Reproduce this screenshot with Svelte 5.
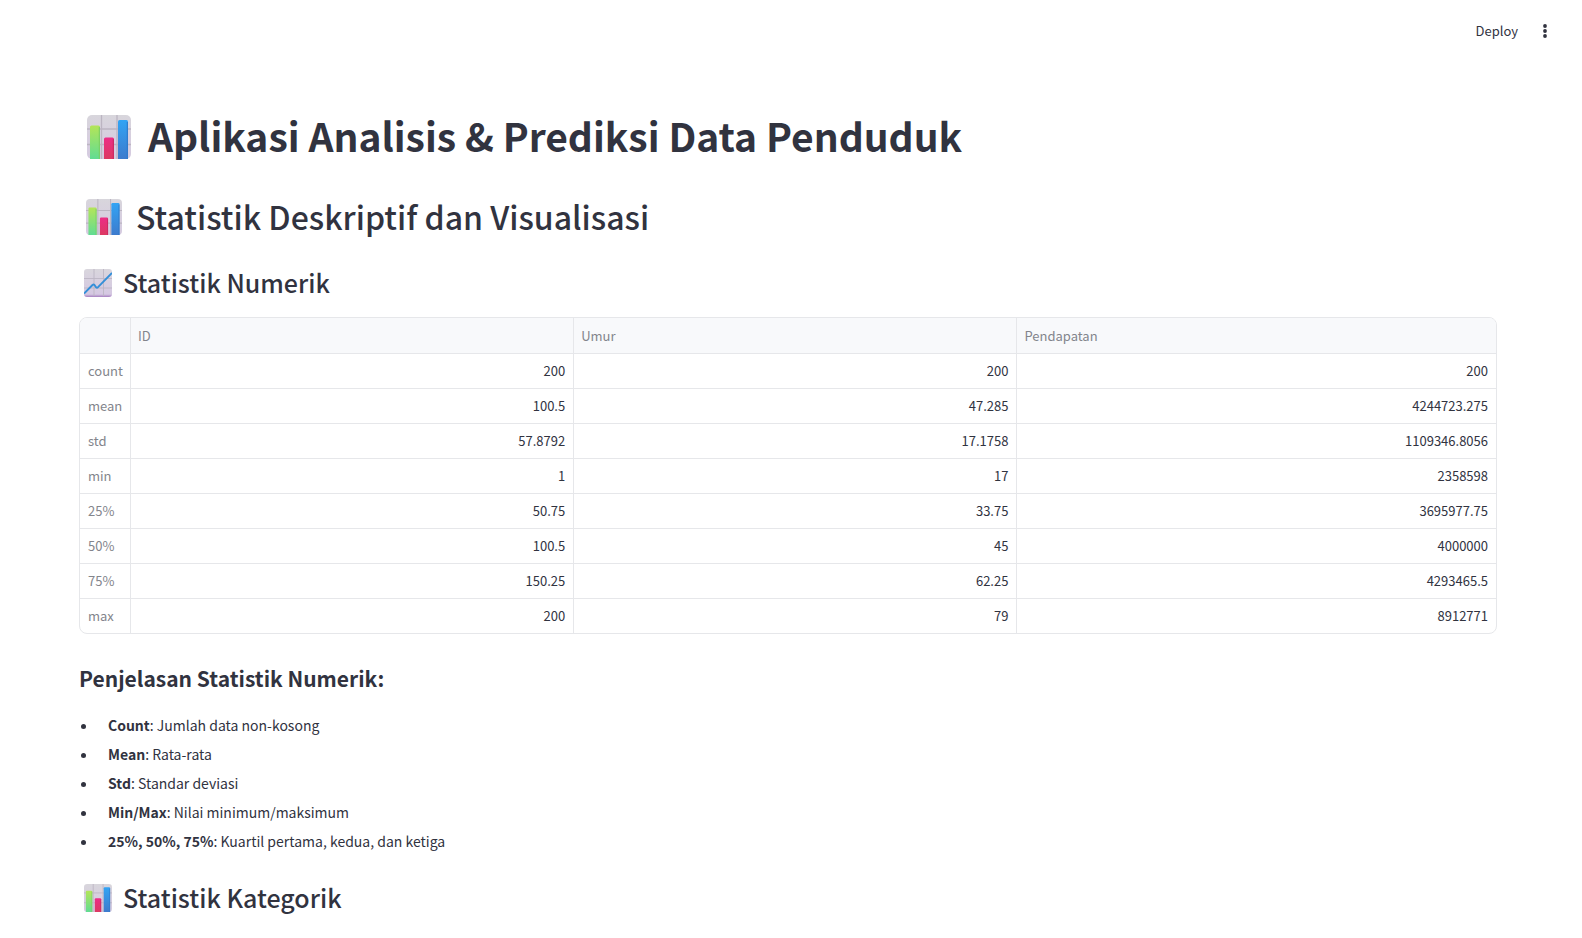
<script>
  const columns = ['ID', 'Umur', 'Pendapatan'];
  const rows = [
    ['count', '200', '200', '200'],
    ['mean', '100.5', '47.285', '4244723.275'],
    ['std', '57.8792', '17.1758', '1109346.8056'],
    ['min', '1', '17', '2358598'],
    ['25%', '50.75', '33.75', '3695977.75'],
    ['50%', '100.5', '45', '4000000'],
    ['75%', '150.25', '62.25', '4293465.5'],
    ['max', '200', '79', '8912771'],
  ];
  const notes = [
    ['Count', 'Jumlah data non-kosong'],
    ['Mean', 'Rata-rata'],
    ['Std', 'Standar deviasi'],
    ['Min/Max', 'Nilai minimum/maksimum'],
    ['25%, 50%, 75%', 'Kuartil pertama, kedua, dan ketiga'],
  ];
</script>

<svg class="defs" width="0" height="0" aria-hidden="true">
  <defs>
    <linearGradient id="tile" x1="0" y1="0" x2="0" y2="1">
      <stop offset="0" stop-color="#d8d6dc" />
      <stop offset="0.5" stop-color="#d7cfdf" />
      <stop offset="1" stop-color="#d5cbe0" />
    </linearGradient>
    <linearGradient id="green" x1="0" y1="0" x2="0" y2="1">
      <stop offset="0" stop-color="#b4e558" />
      <stop offset="1" stop-color="#61dc93" />
    </linearGradient>
    <linearGradient id="pink" x1="0" y1="0" x2="0" y2="1">
      <stop offset="0" stop-color="#ec2d86" />
      <stop offset="1" stop-color="#dc3a62" />
    </linearGradient>
    <linearGradient id="blue" x1="0" y1="0" x2="0" y2="1">
      <stop offset="0" stop-color="#32a4f4" />
      <stop offset="1" stop-color="#3d7bcd" />
    </linearGradient>
    <linearGradient id="base" x1="0" y1="0" x2="0" y2="1">
      <stop offset="0" stop-color="#d9d6dd" />
      <stop offset="0.9" stop-color="#d5c8e2" />
      <stop offset="1" stop-color="#a67fc0" />
    </linearGradient>
  </defs>
</svg>

{#snippet bars()}
  <svg class="icon" viewBox="0 0 44 44" aria-hidden="true">
    <rect width="44" height="44" rx="5" fill="url(#tile)" />
    <path d="M14.500 0V44M30 0V44M0 14H44M0 29.500H44" stroke="#bcb5c2" stroke-width="1.300" />
    <path d="M3 44V12q0-1.500 1.500-1.500h7q1.500 0 1.500 1.500v32z" fill="url(#green)" />
    <path d="M17 44V24q0-1.500 1.500-1.500h7q1.500 0 1.500 1.500v20z" fill="url(#pink)" />
    <path d="M31 44V6.500q0-1.500 1.500-1.500h7q1.500 0 1.500 1.500V44z" fill="url(#blue)" />
    <path d="M12.300 12V44" stroke="#78cf62" stroke-width="1" />
    <path d="M26.300 24V44" stroke="#c92861" stroke-width="1" />
    <path d="M40.300 7V44" stroke="#2d79ca" stroke-width="1" />
  </svg>
{/snippet}

{#snippet trend()}
  <svg class="icon" viewBox="0 0 28 28" aria-hidden="true">
    <rect width="28" height="28" rx="3" fill="url(#base)" />
    <path d="M10 0V27M19.500 0V27M0 9.500H28M0 19H28" stroke="#bcb5c4" stroke-width="0.900" />
    <path d="M0 24.500L8.500 16q1-.8 2 0L12 18.200q1 .9 2 0L28 4" fill="none" stroke="#338fd8" stroke-width="1.900" stroke-linejoin="round" />
  </svg>
{/snippet}

<header>
  <button class="deploy" type="button">Deploy</button>
  <button class="menu" type="button" aria-label="Menu">
    <svg viewBox="0 0 6 16" width="6" height="16" aria-hidden="true">
      <circle cx="3" cy="3" r="1.900" /><circle cx="3" cy="8" r="1.900" /><circle cx="3" cy="13" r="1.900" />
    </svg>
  </button>
</header>

<main>
  <h1>{@render bars()}Aplikasi Analisis &amp; Prediksi Data Penduduk</h1>
  <h2>{@render bars()}Statistik Deskriptif dan Visualisasi</h2>
  <h3>{@render trend()}Statistik Numerik</h3>

  <div class="frame">
    <table>
      <colgroup><col class="index" /><col class="even" /><col class="even" /><col /></colgroup>
      <thead>
        <tr><td></td>{#each columns as name}<th scope="col">{name}</th>{/each}</tr>
      </thead>
      <tbody>
        {#each rows as [label, ...values]}
          <tr><th scope="row">{label}</th>{#each values as value}<td>{value}</td>{/each}</tr>
        {/each}
      </tbody>
    </table>
  </div>

  <h4>Penjelasan Statistik Numerik:</h4>
  <ul>
    {#each notes as [term, text]}<li><strong>{term}</strong>: {text}</li>{/each}
  </ul>

  <h3>{@render bars()}Statistik Kategorik</h3>
</main>

<style>
  :global(body) {
    margin: 0;
    background: #fff;
    color: #31333f;
    font-family: "Noto Sans CJK SC", "Noto Sans", sans-serif;
    font-size: 14px;
  }
  .defs { position: absolute; }
  header {
    display: flex;
    justify-content: flex-end;
    align-items: center;
    gap: 16px;
    height: 62px;
    padding-right: 26px;
  }
  button {
    border: 0;
    background: none;
    color: inherit;
    font: inherit;
    padding: 0;
    cursor: pointer;
  }
  .deploy { font-size: 13px; padding-bottom: 2px; }
  .menu { display: flex; justify-content: center; width: 22px; }
  .menu svg { fill: #31333f; }
  main { padding: 47px 85px 20px 79px; }
  h1, h2, h3, h4 { margin: 0; font-weight: 500; display: flex; align-items: center; }
  h1 { font-size: 39px; line-height: 53px; font-weight: 700; gap: 17px; padding-left: 8px; }
  h2 { font-size: 32px; line-height: 43px; gap: 14px; padding-left: 7px; margin-top: 33px; }
  h3 { font-size: 25px; line-height: 34px; gap: 11px; padding-left: 5px; margin-top: 27px; }
  h4 { font-size: 21px; line-height: 29px; font-weight: 600; margin-top: 30px; }
  ul + h3 { margin-top: 26px; }
  .icon { flex: none; width: 28px; height: 28px; margin-top: 2px; }
  h1 .icon { width: 44px; height: 44px; }
  h2 .icon { width: 36px; height: 36px; margin-top: 0; }
  .frame { margin-top: 18px; border: 1px solid #e6e7ea; border-radius: 8px; overflow: hidden; }
  table { width: 100%; table-layout: fixed; border-collapse: separate; border-spacing: 0; font-size: 13px; line-height: 20px; }
  .index { width: 51px; }
  .even { width: 31.300%; }
  th, td {
    height: 34px;
    padding: 0 8px;
    font-weight: 400;
    text-align: right;
    border-bottom: 1px solid #e6e7ea;
    border-right: 1px solid #e6e7ea;
  }
  th { text-align: left; color: #83858c; padding-right: 0; }
  thead th, thead td { height: 35px; padding: 0 7px; }
  thead { background: #f8f9fb; }
  tr > :last-child { border-right: 0; }
  tbody tr:last-child > * { border-bottom: 0; }
  ul { margin: 19px 0 0; padding-left: 19px; display: flex; flex-direction: column; gap: 3px; }
  li { line-height: 26px; padding-left: 10px; }
  strong { font-weight: 600; }
</style>
